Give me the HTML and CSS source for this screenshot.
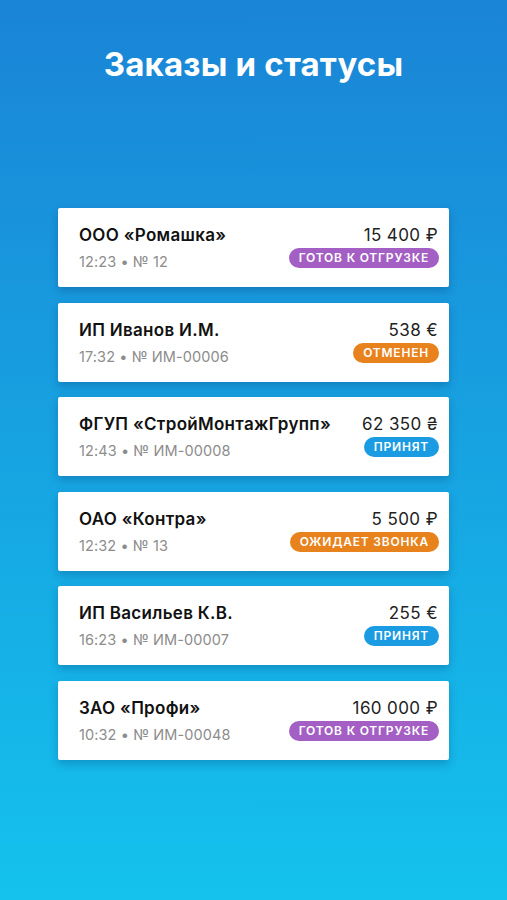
FILE: index.html
```html
<!DOCTYPE html>
<html lang="ru">
<head>
    <meta charset="UTF-8">
    <meta name="viewport" content="width=device-width, initial-scale=1.0">
    <title>Заказы и статусы</title>
    <link rel="stylesheet" href="styles.css">
</head>
<body>
    <h1 class="title">Заказы и статусы</h1>

    <!-- список заказов -->
    <div class="orders">
        <div class="order">
            <div class="order-info">
                <div class="order-name">ООО «Ромашка»</div>
                <div class="order-meta">12:23 • № 12</div>
            </div>
            <div class="order-side">
                <div class="order-sum">15 400 ₽</div>
                <span class="status status-ready">Готов к отгрузке</span>
            </div>
        </div>

        <div class="order">
            <div class="order-info">
                <div class="order-name">ИП Иванов И.М.</div>
                <div class="order-meta">17:32 • № ИМ-00006</div>
            </div>
            <div class="order-side">
                <div class="order-sum">538 €</div>
                <span class="status status-cancel">Отменен</span>
            </div>
        </div>

        <div class="order">
            <div class="order-info">
                <div class="order-name">ФГУП «СтройМонтажГрупп»</div>
                <div class="order-meta">12:43 • № ИМ-00008</div>
            </div>
            <div class="order-side">
                <div class="order-sum">62 350 ₴</div>
                <span class="status status-accepted">Принят</span>
            </div>
        </div>

        <div class="order">
            <div class="order-info">
                <div class="order-name">ОАО «Контра»</div>
                <div class="order-meta">12:32 • № 13</div>
            </div>
            <div class="order-side">
                <div class="order-sum">5 500 ₽</div>
                <span class="status status-cancel">Ожидает звонка</span>
            </div>
        </div>

        <div class="order">
            <div class="order-info">
                <div class="order-name">ИП Васильев К.В.</div>
                <div class="order-meta">16:23 • № ИМ-00007</div>
            </div>
            <div class="order-side">
                <div class="order-sum">255 €</div>
                <span class="status status-accepted">Принят</span>
            </div>
        </div>

        <div class="order">
            <div class="order-info">
                <div class="order-name">ЗАО «Профи»</div>
                <div class="order-meta">10:32 • № ИМ-00048</div>
            </div>
            <div class="order-side">
                <div class="order-sum">160 000 ₽</div>
                <span class="status status-ready">Готов к отгрузке</span>
            </div>
        </div>
    </div>
</body>
</html>
```

FILE: styles.css
```css
html {
    height: 100%;
}
body {
    margin: 0;
    min-height: 100%;
    font-family: Inter, "Open Sans", sans-serif;
    background: linear-gradient(180deg, #1a84d6 0%, #14c2ed 100%);
}
.title {
    margin: 0;
    padding-top: 44px;
    font-size: 33px;
    line-height: 40px;
    font-weight: 700;
    color: #fff;
    text-align: center;
    letter-spacing: 0.2px;
}
.orders {
    display: flex;
    flex-direction: column;
    gap: 15.6px;
    width: 391px;
    margin: 124px auto 0;
}
.order {
    display: flex;
    justify-content: space-between;
    height: 79px;
    box-sizing: border-box;
    padding: 17px 10px 0 21px;
    background: #fff;
    border-radius: 2px;
    box-shadow: 0 4px 8px rgba(0, 40, 90, 0.25);
}
.order-name {
    font-size: 17px;
    line-height: 21px;
    font-weight: 600;
    letter-spacing: 0.3px;
    color: #111;
}
.order-meta {
    margin-top: 7px;
    font-size: 14.5px;
    line-height: 18px;
    letter-spacing: 0.1px;
    color: #8c8c8c;
}
.order-side {
    display: flex;
    flex-direction: column;
    align-items: flex-end;
}
.order-sum {
    font-size: 17px;
    line-height: 21px;
    letter-spacing: 0.4px;
    color: #222;
    padding-right: 1px;
}
.status {
    margin-top: 2px;
    height: 20px;
    line-height: 20px;
    padding: 0 10px;
    border-radius: 10px;
    font-size: 12px;
    font-weight: 600;
    letter-spacing: 0.8px;
    text-transform: uppercase;
    color: #fff;
}
.status-ready {
    background: #a45fc4;
}
.status-cancel {
    background: #e8821c;
}
.status-accepted {
    background: #1a9be2;
}
```
